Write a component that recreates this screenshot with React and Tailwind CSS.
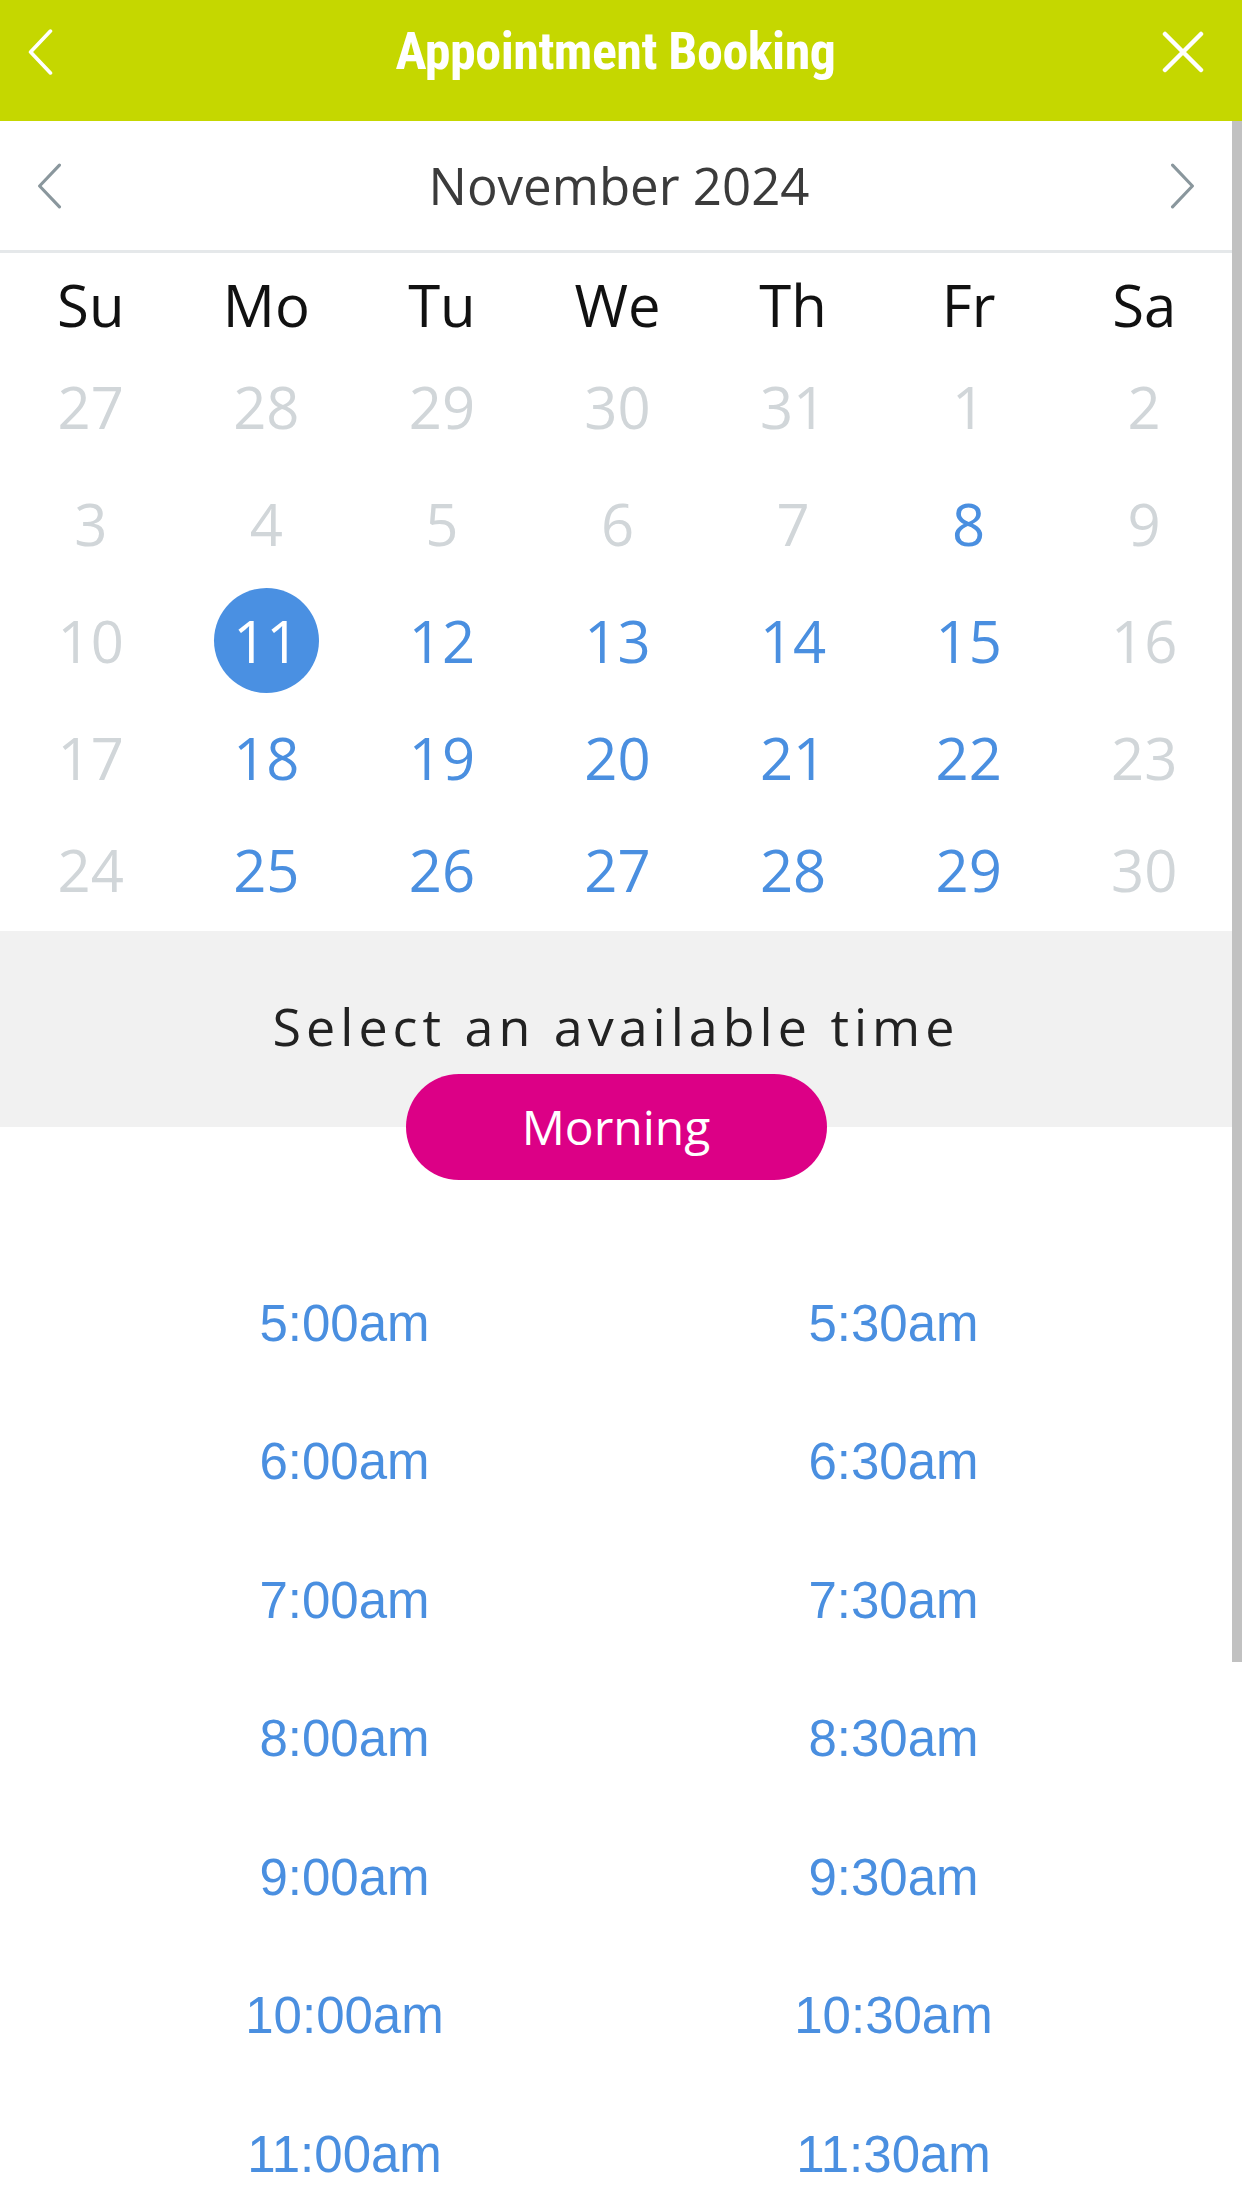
import React from "react";

const weekDays = ["Su", "Mo", "Tu", "We", "Th", "Fr", "Sa"];

// each cell: [label, state] where state is "off" | "on" | "sel"
const weeks = [
  [["27", "off"], ["28", "off"], ["29", "off"], ["30", "off"], ["31", "off"], ["1", "off"], ["2", "off"]],
  [["3", "off"], ["4", "off"], ["5", "off"], ["6", "off"], ["7", "off"], ["8", "on"], ["9", "off"]],
  [["10", "off"], ["11", "sel"], ["12", "on"], ["13", "on"], ["14", "on"], ["15", "on"], ["16", "off"]],
  [["17", "off"], ["18", "on"], ["19", "on"], ["20", "on"], ["21", "on"], ["22", "on"], ["23", "off"]],
  [["24", "off"], ["25", "on"], ["26", "on"], ["27", "on"], ["28", "on"], ["29", "on"], ["30", "off"]],
];

const times = [
  "5:00am", "5:30am",
  "6:00am", "6:30am",
  "7:00am", "7:30am",
  "8:00am", "8:30am",
  "9:00am", "9:30am",
  "10:00am", "10:30am",
  "11:00am", "11:30am",
];

function Chevron({ dir = "left", className, stroke = 3 }) {
  const d = dir === "left" ? "M22 2 L3 22 L22 42" : "M2 2 L21 22 L2 42";
  return (
    <svg viewBox="0 0 24 44" className={className} fill="none">
      <path d={d} stroke="currentColor" strokeWidth={stroke} strokeLinecap="round" strokeLinejoin="round" />
    </svg>
  );
}

function DayCell({ label, state, last }) {
  const h = last ? "h-[115px] pb-[7px]" : "h-[117px]";
  if (state === "sel") {
    return (
      <div className={`flex items-center justify-center ${h}`}>
        <span className="w-[105px] h-[105px] rounded-full bg-[#4a90e2] text-white flex items-center justify-center">{label}</span>
      </div>
    );
  }
  return (
    <div className={`flex items-center justify-center ${h} ${state === "on" ? "text-[#4a8fe0]" : "text-[#d1d6d9]"}`}>
      {label}
    </div>
  );
}

export default function App() {
  return (
    <div className="w-[1242px] bg-white font-['Open_Sans',sans-serif] overflow-hidden">
      <header className="h-[121px] pb-[17px] bg-[#c5d700] grid grid-cols-[1fr_auto_1fr] items-center pl-[27px] pr-[38px] text-white">
        <Chevron dir="left" className="w-[26px] h-[46px]" stroke={3.5} />
        <h1 className="font-['Roboto_Condensed','Liberation_Sans_Narrow','Arial_Narrow','DejaVu_Sans_Condensed',sans-serif] font-bold text-[52px] leading-none tracking-[-0.5px]">
          Appointment Booking
        </h1>
        <svg viewBox="0 0 42 42" className="w-[42px] h-[42px] justify-self-end" fill="none">
          <path d="M3 3 L39 39 M39 3 L3 39" stroke="currentColor" strokeWidth="4.5" strokeLinecap="round" />
        </svg>
      </header>

      <div className="flex">
        <main className="w-[1232px]">
          <div className="h-[129px] flex items-center justify-between px-[36px] text-[#8a979d]">
            <Chevron dir="left" className="w-[26px] h-[46px]" />
            <span className="text-[51px] leading-none text-[#3b3b3b] pl-[6px]">November 2024</span>
            <Chevron dir="right" className="w-[26px] h-[46px]" />
          </div>
          <div className="h-[3px] bg-[#e5e8ea]" />

          <div className="grid grid-cols-7 pl-[3px] text-[58px] leading-none">
            {weekDays.map((d) => (
              <div key={d} className="h-[95px] pt-[8px] flex items-center justify-center text-[#111]">{d}</div>
            ))}
            {weeks.map((w, i) =>
              w.map(([label, state], j) => (
                <DayCell key={`${i}-${j}`} label={label} state={state} last={i === weeks.length - 1} />
              ))
            )}
          </div>

          <section className="bg-[#f1f1f1] h-[196px] flex justify-center pt-[69px]">
            <h2 className="text-[52px] leading-none tracking-[5px] text-[#222]">Select an available time</h2>
          </section>
          <div className="flex justify-center -mt-[53px] relative">
            <button className="w-[421px] h-[106px] rounded-full bg-[#dc0086] text-white text-[48px] leading-none">Morning</button>
          </div>

          <div className="grid grid-cols-2 pl-[70px] pr-[64px] mt-[74px] font-['Liberation_Sans',Arial,sans-serif] text-[51px] leading-none text-[#4a8fe0]">
            {times.map((t) => (
              <div key={t} className="h-[138.5px] flex items-center justify-center">{t}</div>
            ))}
          </div>
        </main>
        <aside className="w-[10px]">
          <div className="h-[1541px] bg-[#c1c1c1]" />
        </aside>
      </div>
    </div>
  );
}
